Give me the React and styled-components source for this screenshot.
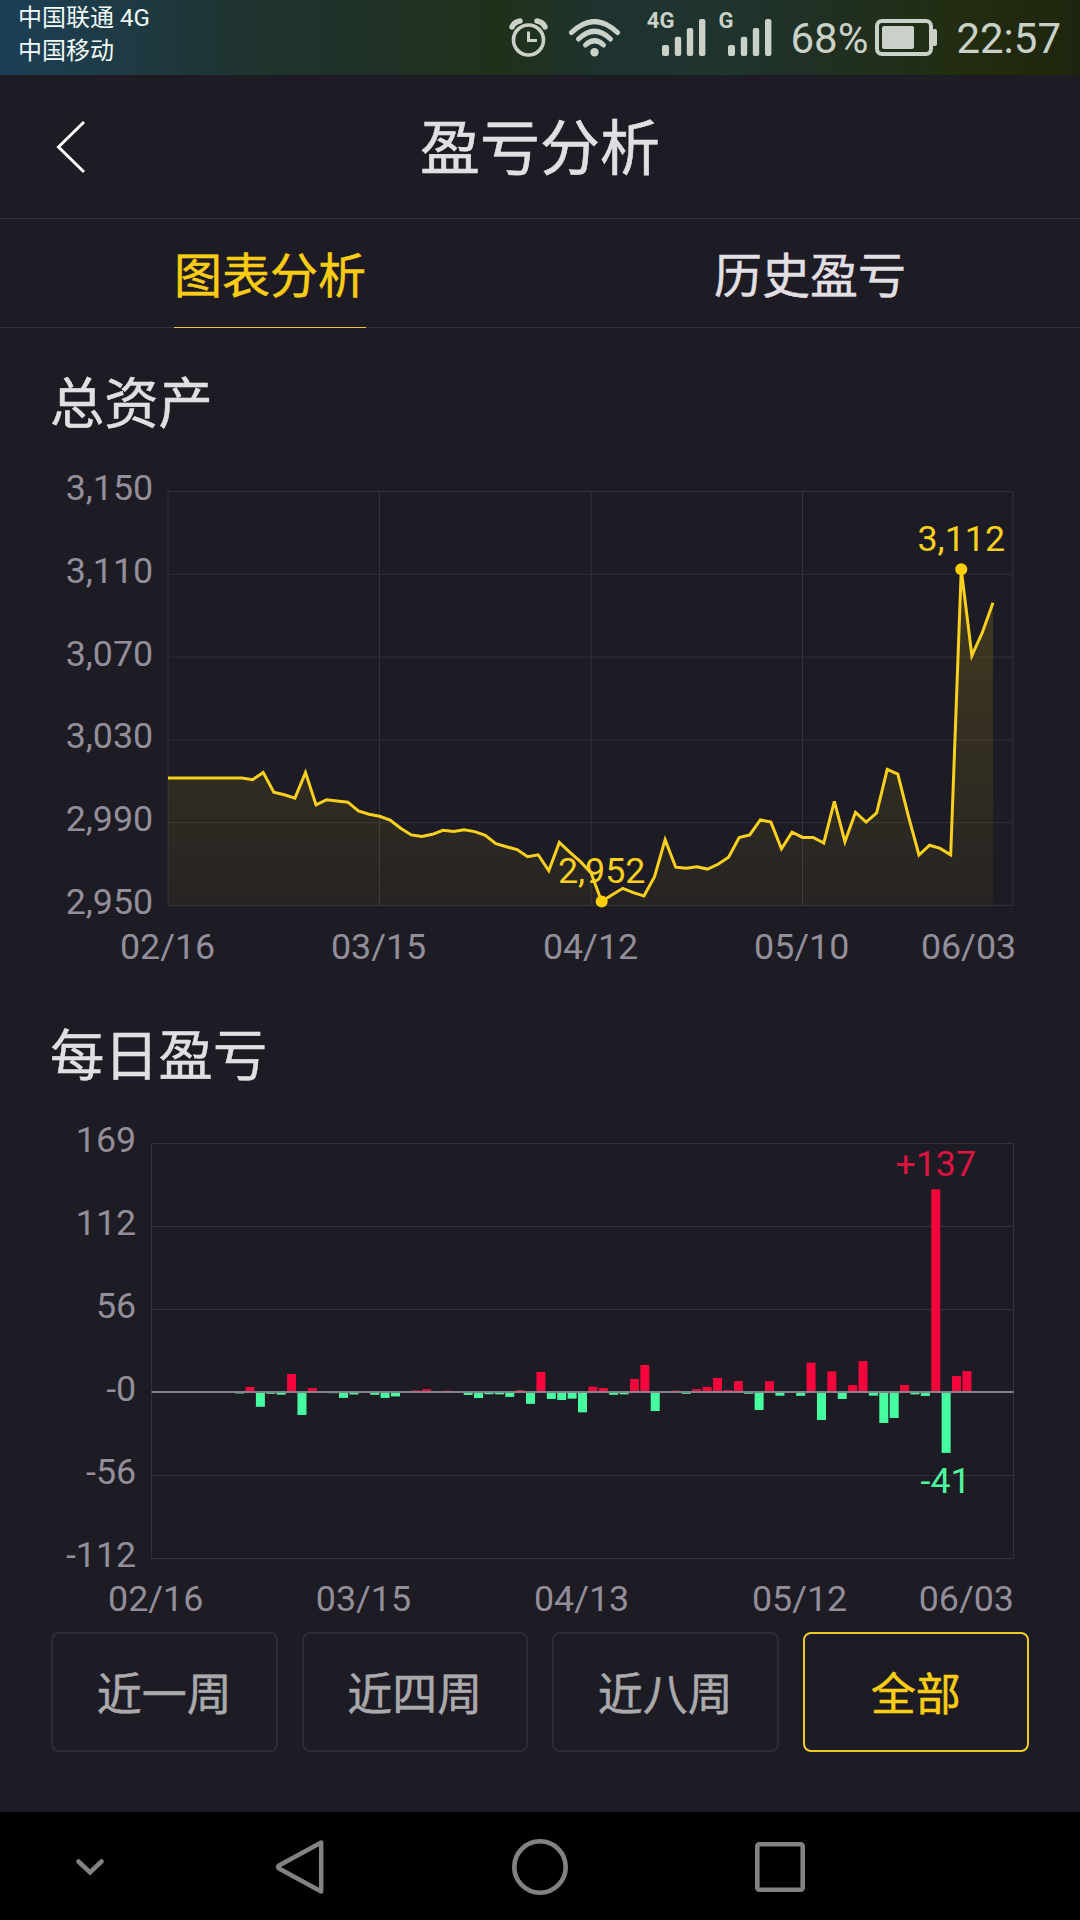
import React, { useState } from "react";
import styled, { createGlobalStyle } from "styled-components";

const totalAssets = [
  3011.6, 3011.6, 3011.6, 3011.6, 3011.6, 3011.6, 3011.6, 3011.6, 3010.8, 3014.3,
  3004.7, 3003.5, 3001.9, 3014.2, 2998.6, 3001.1, 3000.5, 2999.9, 2995.7, 2994.1,
  2993.1, 2991.3, 2987.3, 2984.1, 2983.4, 2984.4, 2986.3, 2985.8, 2986.6, 2985.7,
  2983.9, 2979.9, 2978.4, 2977, 2973.6, 2974.5, 2966.8, 2980.5, 2975.7, 2971.2,
  2965.7, 2951.9, 2955.2, 2958.3, 2956.2, 2954.6, 2963.9, 2981.8, 2968.5, 2968,
  2968.7, 2967.6, 2969.9, 2973.3, 2982.8, 2984.1, 2991.4, 2990.3, 2977.4, 2985.4,
  2982.9, 2982.9, 2980.2, 3000.3, 2980.8, 2995, 2990.3, 2994.7, 3015.8, 3013.5,
  2993.2, 2974.4, 2979.1, 2977.6, 2974.5, 3112.4, 3070.7, 3082, 3096.3,
];

const dailyProfit = [
  0, 0, 0, 0, 0, 0, 0, 0, -1, 3.4,
  -10, -1.2, -1.8, 12.2, -15.6, 2.7, -0.6, -0.8, -4, -1.7,
  -0.6, -1.9, -4, -3, -0.5, 1.1, 1.9, -0.5, 0.9, -0.6,
  -2, -4.1, -1.5, -1.6, -3.3, 1.3, -8, 13.6, -4.7, -5.4,
  -4.5, -13.8, 3.6, 2.7, -1.9, -1.6, 8.8, 18.3, -12.9, -0.5,
  1, -1.2, 2, 3.4, 9.5, 1.3, 7.4, -1.2, -12.2, 7.4,
  -2.5, 0, -2.6, 19.9, -19, 14, -4.7, 4.7, 21, -2.5,
  -21, -17.6, 4.7, -1.6, -2.7, 137.4, -41.3, 10.8, 14.2,
];

const ranges = ["近一周", "近四周", "近八周", "全部"];
const tabs = ["图表分析", "历史盈亏"];

const App = () => {
  const [tab, setTab] = useState(tabs[0]);
  const [range, setRange] = useState("全部");

  return (
    <>
      <GlobalStyle />
      <Screen>
        <StatusBar />
        <Header>
          <BackButton aria-label="返回">
            <svg width="30" height="54" viewBox="0 0 30 54">
              <path d="M28 2 L2.5 27 L28 52" fill="none" stroke="#fff" strokeWidth="3" />
            </svg>
          </BackButton>
          <h1>盈亏分析</h1>
        </Header>
        <Tabs>
          {tabs.map((name) => (
            <Tab key={name} onClick={() => setTab(name)}>
              <TabLabel $active={name === tab}>{name}</TabLabel>
            </Tab>
          ))}
        </Tabs>
        <Content>
          <SectionTitle>总资产</SectionTitle>
          <AssetsChart />
          <SectionTitle>每日盈亏</SectionTitle>
          <ProfitChart />
          <Ranges>
            {ranges.map((name) => (
              <RangeButton key={name} $active={name === range} onClick={() => setRange(name)}>
                {name}
              </RangeButton>
            ))}
          </Ranges>
        </Content>
        <NavBar />
      </Screen>
    </>
  );
};

const Signal = ({ label, overlap }) => (
  <SignalBox>
    <SignalLabel $overlap={overlap}>{label}</SignalLabel>
    <svg width="44" height="37" viewBox="0 0 44 37" fill="currentColor">
      <rect x="0" y="26" width="7" height="11" rx="2" />
      <rect x="12.8" y="17.7" width="6.4" height="19.3" rx="2" />
      <rect x="24.8" y="9" width="6.4" height="28" rx="2" />
      <rect x="37" y="0" width="6.4" height="37" rx="2" />
    </svg>
  </SignalBox>
);

const StatusBar = () => (
  <StatusRow>
    <Carriers>
      <span>中国联通 4G</span>
      <span>中国移动</span>
    </Carriers>
    <StatusIcons>
      <svg width="39" height="39" viewBox="0 0 39 39" fill="none" stroke="currentColor">
        <circle cx="19.5" cy="22" r="15" strokeWidth="3.6" />
        <path d="M19.5 13.5 V22.5 H28" strokeWidth="3" />
        <path d="M3 9 Q5 4 11 3" strokeWidth="5.5" strokeLinecap="round" />
        <path d="M36 9 Q34 4 28 3" strokeWidth="5.5" strokeLinecap="round" />
      </svg>
      <WifiIcon width="51" height="38" viewBox="0 0 51 38" fill="none" stroke="currentColor">
        <path d="M2.5 13.5 Q25.5 -8.5 48.5 13.5" strokeWidth="5" strokeLinecap="round" />
        <path d="M9.5 20 Q25.5 4.5 41.5 20" strokeWidth="5" strokeLinecap="round" />
        <path d="M16.5 26 Q25.5 17.5 34.5 26" strokeWidth="5" strokeLinecap="round" />
        <circle cx="25.5" cy="33.2" r="4.2" fill="currentColor" stroke="none" />
      </WifiIcon>
      <Signal label="4G" overlap={12} />
      <Signal label="G" overlap={5} />
      <StatusText>68%</StatusText>
      <svg width="62" height="37" viewBox="0 0 62 37">
        <rect x="2" y="2" width="54" height="33" rx="5" fill="none" stroke="currentColor" strokeWidth="4" />
        <rect x="7" y="7" width="32" height="23" rx="2" fill="currentColor" />
        <rect x="57" y="10" width="5" height="17" rx="2" fill="currentColor" />
      </svg>
      <Clock>22:57</Clock>
    </StatusIcons>
  </StatusRow>
);

const AssetsChart = () => {
  const left = 168;
  const right = 1013;
  const top = 53.5;
  const bottom = 467.5;
  const x = (i) => left + i * 10.577;
  const y = (value) => bottom - ((value - 2950) / 200) * (bottom - top);

  const line = totalAssets.map((value, i) => `${x(i)},${y(value)}`).join(" ");
  const yTicks = [3150, 3110, 3070, 3030, 2990, 2950];
  const xTicks = [["02/16", 167.6], ["03/15", 378.6], ["04/12", 590.5], ["05/10", 801.7], ["06/03", 968.5]];

  return (
    <Chart width="1080" height="580" viewBox="0 0 1080 580">
      <defs>
        <linearGradient id="assetsFill" gradientUnits="userSpaceOnUse" x1="0" y1={top} x2="0" y2={bottom}>
          <stop offset="0" stopColor="#f0d20a" stopOpacity="0.2" />
          <stop offset="1" stopColor="#f0d20a" stopOpacity="0.045" />
        </linearGradient>
      </defs>
      {yTicks.map((tick) => (
        <g key={tick}>
          <GridLine x1={left} x2={right} y1={y(tick)} y2={y(tick)} $soft />
          <AxisText x="153.2" y={Math.round(y(tick) + 8.4)} textAnchor="end">
            {tick.toLocaleString("en-US")}
          </AxisText>
        </g>
      ))}
      {[168, 379.5, 591, 802.5, 1013].map((pos) => (
        <GridLine key={pos} x1={pos} x2={pos} y1={top} y2={bottom} />
      ))}
      <polygon points={`${left},${bottom} ${line} ${x(78)},${bottom}`} fill="url(#assetsFill)" />
      <polyline points={line} fill="none" stroke="#fad01e" strokeWidth="3" />
      {[75, 41].map((i) => (
        <g key={i}>
          <circle cx={x(i)} cy={y(totalAssets[i])} r="6" fill="#ffd000" />
          <MarkText x={x(i)} y={y(totalAssets[i]) - 18.4} textAnchor="middle" $color="#fad01e">
            {Math.round(totalAssets[i]).toLocaleString("en-US")}
          </MarkText>
        </g>
      ))}
      {xTicks.map(([label, pos]) => (
        <AxisText key={label} x={pos} y="521" textAnchor="middle">
          {label}
        </AxisText>
      ))}
    </Chart>
  );
};

const ProfitChart = () => {
  const left = 151.5;
  const right = 1013.5;
  const top = 53.5;
  const bottom = 468.5;
  const zero = 302;
  const step = 83;
  const x = (i) => 152 + i * 10.39;
  const scale = 1.475;

  const yTicks = ["169", "112", "56", "-0", "-56", "-112"];
  const xTicks = [["02/16", 155.7], ["03/15", 363.4], ["04/13", 581.6], ["05/12", 799.6], ["06/03", 966.3]];

  return (
    <Chart width="1080" height="542" viewBox="0 0 1080 542">
      {yTicks.map((tick, i) => (
        <g key={tick}>
          {tick !== "-0" && <GridLine x1={left} x2={right} y1={top + i * step} y2={top + i * step} />}
          <AxisText x="136.2" y={top + i * step + 8.4} textAnchor="end">
            {tick}
          </AxisText>
        </g>
      ))}
      <GridLine x1={left} x2={left} y1={top} y2={bottom} />
      <GridLine x1={right} x2={right} y1={top} y2={bottom} />
      {dailyProfit.map((value, i) => (
        <rect
          key={i}
          x={x(i)}
          y={value > 0 ? zero - value * scale : zero}
          width="9"
          height={Math.abs(value) * scale}
          fill={value > 0 ? "#f5053c" : "#46ffa0"}
        />
      ))}
      <line x1={left} x2={right} y1={zero} y2={zero} stroke="#85828c" strokeWidth="2" />
      <MarkText x={x(75) + 4.5} y="86" textAnchor="middle" $color="#dc143f">
        +137
      </MarkText>
      <MarkText x={x(76) + 4} y="403" textAnchor="middle" $color="#50fa9f">
        -41
      </MarkText>
      {xTicks.map(([label, pos]) => (
        <AxisText key={label} x={pos} y="521" textAnchor="middle">
          {label}
        </AxisText>
      ))}
    </Chart>
  );
};

const NavBar = () => (
  <NavRow>
    <svg width="28" height="17" viewBox="0 0 28 17">
      <path d="M2.5 2.5 L14 13.5 L25.5 2.5" strokeWidth="4.5" strokeLinecap="round" />
    </svg>
    <svg width="50" height="56" viewBox="0 0 50 56">
      <path d="M46.2 3.5 V52.5 L4 29.5 Q2 28 4 26.5 Z" strokeWidth="4.5" strokeLinejoin="round" />
    </svg>
    <svg width="56" height="56" viewBox="0 0 56 56">
      <circle cx="28" cy="28" r="25.7" strokeWidth="4.6" />
    </svg>
    <svg width="50" height="50" viewBox="0 0 50 50">
      <rect x="2.3" y="2.3" width="45.4" height="45.4" rx="2" strokeWidth="4.6" />
    </svg>
  </NavRow>
);

const GlobalStyle = createGlobalStyle`
  * {
    margin: 0;
    padding: 0;
    box-sizing: border-box;
  }
  body {
    background: #1d1b24;
    font-family: Roboto, "Noto Sans CJK SC", sans-serif;
  }
  button {
    background: none;
    border: none;
    font-family: inherit;
  }
`;

const Screen = styled.div`
  width: 1080px;
  height: 1920px;
  display: flex;
  flex-direction: column;
  background: #1d1b24;
  color: #e1dfe2;
  overflow: hidden;
`;

const StatusRow = styled.div`
  height: 75px;
  flex: none;
  display: flex;
  justify-content: space-between;
  padding: 0 19px 0 18px;
  color: #c9d1c8;
  background: linear-gradient(
    90deg,
    #1d3e55 0%,
    #1e3a43 12%,
    #1f3431 22%,
    #203122 40%,
    #203119 46%,
    #1e3330 56%,
    #1f342e 68%,
    #202f20 78%,
    #222d10 89%,
    #1e250e 100%
  );
`;

const Carriers = styled.div`
  display: flex;
  flex-direction: column;
  color: #f0faf8;
  font-size: 24px;
  line-height: 33px;
  padding-top: 2px;
`;

const StatusIcons = styled.div`
  display: flex;
  align-items: center;
`;

const WifiIcon = styled.svg`
  margin: 0 27px 0 21px;
`;

const SignalBox = styled.div`
  display: flex;
  margin-right: 12px;
`;

const SignalLabel = styled.span`
  font-size: 22px;
  line-height: 22px;
  font-weight: 700;
  margin: -9px ${(props) => -props.$overlap}px 0 0;
`;

const StatusText = styled.span`
  font-size: 42px;
  line-height: 50px;
  margin: 3px 7px 0 6px;
`;

const Clock = styled(StatusText)`
  margin: 3px 0 0 19px;
`;

const Header = styled.header`
  height: 144px;
  flex: none;
  display: grid;
  grid-template-columns: 142px 1fr 142px;
  align-items: center;
  border-bottom: 1px solid #34323b;
  h1 {
    font-size: 60px;
    line-height: 88px;
    padding-top: 6px;
    font-weight: 400;
    text-align: center;
    -webkit-text-stroke: 0.6px;
  }
`;

const BackButton = styled.button`
  height: 143px;
  display: flex;
  align-items: center;
  padding: 1px 0 0 56px;
`;

const Tabs = styled.nav`
  height: 109px;
  flex: none;
  display: grid;
  grid-template-columns: 1fr 1fr;
  border-bottom: 1px solid #34323b;
`;

const Tab = styled.button`
  height: 109px;
  display: flex;
  justify-content: center;
`;

const TabLabel = styled.span`
  height: 109px;
  font-size: 48px;
  line-height: 106px;
  padding-top: 5px;
  -webkit-text-stroke: 0.5px;
  color: ${(props) => (props.$active ? "#facd14" : "#e1dfe2")};
  border-bottom: ${(props) => (props.$active ? "1px solid #e9c92c" : "none")};
`;

const Content = styled.main`
  height: 1484px;
  flex: none;
  padding-top: 38px;
`;

const SectionTitle = styled.h2`
  height: 72px;
  line-height: 78px;
  padding-left: 50px;
  font-size: 54.3px;
  font-weight: 400;
  -webkit-text-stroke: 0.5px;
`;

const Chart = styled.svg`
  display: block;
`;

const GridLine = styled.line`
  stroke: ${(props) => (props.$soft ? "#302f36" : "#35333a")};
  stroke-width: 1;
`;

const AxisText = styled.text`
  font-size: 35.8px;
  fill: #938f9a;
`;

const MarkText = styled.text`
  font-size: 35.8px;
  fill: ${(props) => props.$color};
`;

const Ranges = styled.div`
  display: grid;
  grid-template-columns: repeat(4, 1fr);
  gap: 24px;
  padding: 0 51px;
`;

const RangeButton = styled.button`
  height: 120px;
  border: 2px solid ${(props) => (props.$active ? "#f0cb28" : "#2d2c33")};
  border-radius: 8px;
  color: ${(props) => (props.$active ? "#facd14" : "#aaa9ac")};
  font-size: 45px;
  line-height: 66px;
  padding-top: 8px;
  -webkit-text-stroke: 0.5px;
`;

const NavRow = styled.footer`
  height: 108px;
  flex: none;
  display: grid;
  grid-template-columns: 180px 240px 240px 239px;
  justify-items: center;
  align-items: center;
  padding-top: 2px;
  background: #000;
  svg {
    fill: none;
    stroke: #828282;
  }
`;

export default App;
